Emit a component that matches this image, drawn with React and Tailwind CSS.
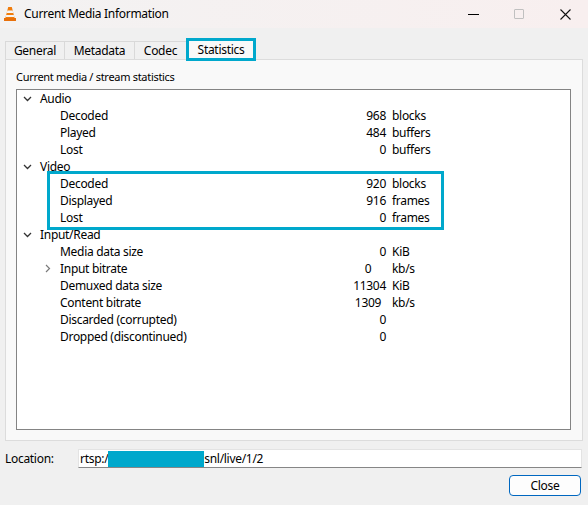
import React from "react";

const font = { fontFamily: '"Noto Sans", "Open Sans", sans-serif' };

function Chevron({ down = true, color = "#333" }) {
  return down ? (
    <svg width="9" height="6" viewBox="0 0 9 6" className="block">
      <path d="M1 1 L4.5 4.5 L8 1" fill="none" stroke={color} strokeWidth="1.3" />
    </svg>
  ) : (
    <svg width="6" height="9" viewBox="0 0 6 9" className="block">
      <path d="M1 1 L4.5 4.5 L1 8" fill="none" stroke={color} strokeWidth="1.2" />
    </svg>
  );
}

function Category({ label }) {
  return (
    <div className="flex items-center h-[17px]">
      <div className="w-[23px] pl-[6px] flex items-center">
        <Chevron />
      </div>
      <span>{label}</span>
    </div>
  );
}

function Row({ label, value, unit, center = false, expander = false }) {
  return (
    <div className="flex items-center h-[17px] pl-[28px]">
      <div className="w-[15px] flex items-center">
        {expander && <Chevron down={false} color="#7a7a7a" />}
      </div>
      <span className="w-[286px] whitespace-nowrap">{label}</span>
      <span className={"w-[40px] " + (center ? "text-center pl-[4px]" : "text-right")}>{value}</span>
      <span className="ml-[6px]">{unit}</span>
    </div>
  );
}

function VlcIcon() {
  return (
    <svg width="14" height="16" viewBox="0 0 14 16">
      <path d="M5.2 1 L8.8 1 L11.6 12 L2.4 12 Z" fill="#f07c0c" />
      <path d="M4.4 4.4 L9.6 4.4 L10.3 7 L3.7 7 Z" fill="#f5f5f5" />
      <path d="M3.2 9 L10.8 9 L11.3 11 L2.7 11 Z" fill="#f5f5f5" />
      <path d="M1 12 L13 12 L13 14.5 Q13 15 12.5 15 L1.5 15 Q1 15 1 14.5 Z" fill="#e8700a" />
    </svg>
  );
}

export default function App() {
  return (
    <div className="w-[588px] h-[505px] bg-[#f0f0f0] flex flex-col text-[12px] tracking-[-0.3px] text-black overflow-hidden" style={font}>
      {/* Title bar */}
      <div className="h-[28px] flex items-center bg-gradient-to-r from-[#f3f2f2] to-[#f8efef]">
        <div className="pl-[3px] pr-[7px] flex items-center">
          <VlcIcon />
        </div>
        <span className="text-[12px]">Current Media Information</span>
        <div className="ml-auto flex items-center h-full">
          <div className="w-[46px] h-full flex items-center justify-center">
            <div className="w-[11px] h-[1px] bg-black" />
          </div>
          <div className="w-[46px] h-full flex items-center justify-center">
            <div className="w-[10px] h-[10px] border border-[#c0c0c0] rounded-[1px]" />
          </div>
          <div className="w-[46px] h-full flex items-center justify-center">
            <svg width="11" height="11" viewBox="0 0 11 11">
              <path d="M0.5 0.5 L10.5 10.5 M10.5 0.5 L0.5 10.5" stroke="#111" strokeWidth="1.1" />
            </svg>
          </div>
        </div>
      </div>

      {/* Tabs */}
      <div className="px-[5px] mt-[11px] flex flex-col">
        <div className="flex items-end h-[20px]">
          <div className="w-[60px] h-[18px] border border-b-0 border-[#d9d9d9] flex items-center justify-center">General</div>
          <div className="w-[70px] h-[18px] border border-b-0 border-l-0 border-[#d9d9d9] flex items-center justify-center">Metadata</div>
          <div className="w-[52px] h-[18px] border border-b-0 border-l-0 border-[#d9d9d9] flex items-center justify-center">Codec</div>
          <div className="w-[70px] h-[23px] -mb-[2px] -ml-[1px] relative z-10 border-[3px] border-[#00a8cc] bg-[#f9f9f9] flex items-center justify-center">Statistics</div>
        </div>
        <div className="h-[382px] border border-[#dcdcdc] bg-[#f9f9f9] flex flex-col pl-[10px] pr-[11px]">
          <div className="h-[29px] flex items-center pt-[6px] text-[11px]">Current media / stream statistics</div>
          <div className="relative h-[341px] border border-[#848484] bg-white">
            <Category label="Audio" />
            <Row label="Decoded" value="968" unit="blocks" />
            <Row label="Played" value="484" unit="buffers" />
            <Row label="Lost" value="0" unit="buffers" />
            <Category label="Video" />
            <Row label="Decoded" value="920" unit="blocks" />
            <Row label="Displayed" value="916" unit="frames" />
            <Row label="Lost" value="0" unit="frames" />
            <Category label="Input/Read" />
            <Row label="Media data size" value="0" unit="KiB" />
            <Row label="Input bitrate" value="0" unit="kb/s" center expander />
            <Row label="Demuxed data size" value="11304" unit="KiB" />
            <Row label="Content bitrate" value="1309" unit="kb/s" center />
            <Row label="Discarded (corrupted)" value="0" unit="" />
            <Row label="Dropped (discontinued)" value="0" unit="" />
            <div className="absolute left-[30px] top-[81px] w-[397px] h-[59px] border-[3px] border-[#00a8cc]" />
          </div>
        </div>
      </div>

      {/* Location */}
      <div className="flex items-center mt-[8px] pl-[5px] pr-[6px]">
        <span className="w-[73px]">Location:</span>
        <div className="flex-1 h-[19px] bg-white border border-[#e3e3e3] border-b-[#868686] flex items-center pl-[1px]">
          <span>rtsp:/</span>
          <span className="inline-block w-[96px] h-[16px] bg-[#00a8cc]" />
          <span>snl/live/1/2</span>
        </div>
      </div>

      {/* Close */}
      <div className="flex justify-end pr-[7px] mt-[7px]">
        <button className="w-[72px] h-[21px] border border-[#0067c0] rounded-[4px] bg-[#fdfdfd] flex items-center justify-center">Close</button>
      </div>
    </div>
  );
}
